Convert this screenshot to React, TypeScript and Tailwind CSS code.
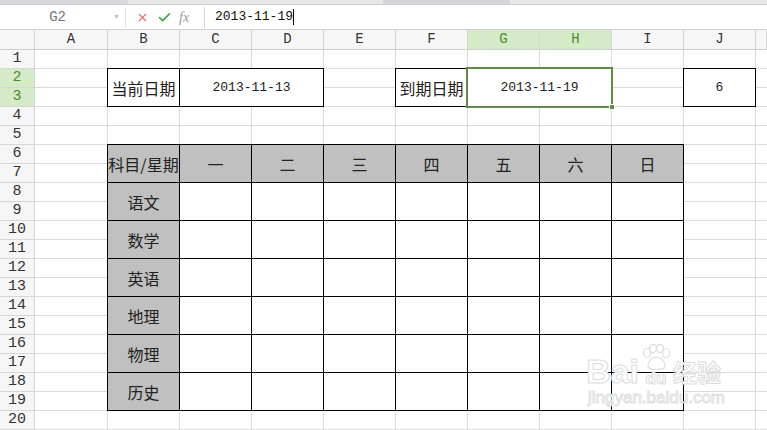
import { X, Check } from "lucide-react";

const COLS = ["A", "B", "C", "D", "E", "F", "G", "H", "I", "J", ""];
const ROWS = Array.from({ length: 20 }, (_, i) => i + 1);
const DAYS = ["一", "二", "三", "四", "五", "六", "日"];
const SUBJECTS = ["语文", "数学", "英语", "地理", "物理", "历史"];

const mono = "font-['Liberation_Mono','Noto_Sans_CJK_SC',monospace]";
const cjk = "font-['Noto_Sans_CJK_SC',sans-serif]";

const Watermark = () => (
  <div className="absolute left-[586px] top-[344px] pointer-events-none select-none">
    <div className="flex items-end">
      <span className="font-['Liberation_Sans',sans-serif] font-bold text-[34px] leading-[34px] text-white [-webkit-text-stroke:1px_#dcdcdc]">
        Bai
      </span>
      <div className="relative w-[34px] h-[44px] flex items-end justify-center">
        <svg width="32" height="26" viewBox="0 0 32 26" className="absolute top-0 left-[1px]">
          <g fill="#fff" stroke="#dcdcdc" strokeWidth="1.2">
            <ellipse cx="7" cy="9" rx="3.5" ry="4.5" />
            <ellipse cx="13" cy="4.5" rx="3.5" ry="4.2" />
            <ellipse cx="20" cy="4.5" rx="3.5" ry="4.2" />
            <ellipse cx="26" cy="9" rx="3.5" ry="4.5" />
            <path d="M8 22c0-5 4-9 8.5-9s8.5 4 8.5 9c0 3-3 3.5-8.5 3.5S8 25 8 22z" />
          </g>
        </svg>
        <span className="relative font-['Liberation_Sans',sans-serif] font-bold text-[17px] leading-[18px] text-white [-webkit-text-stroke:1px_#dcdcdc]">
          du
        </span>
      </div>
      <span className={`${cjk} font-bold text-[24px] leading-[32px] text-white [-webkit-text-stroke:1px_#dcdcdc]`}>
        经验
      </span>
    </div>
    <div className="font-['Liberation_Sans',sans-serif] text-[17px] leading-[20px] text-white [-webkit-text-stroke:1px_#e0e0e0] pl-[2px]">
      jingyan.baidu.com
    </div>
  </div>
);

export default function App() {
  return (
    <div className="w-[767px] h-[430px] overflow-hidden bg-white relative flex flex-col text-[#222]">
      {/* tab strip remnant */}
      <div className="h-[5px] flex bg-[#e6e7e9] border-b border-[#cfd0d3]">
        <div className="w-[128px] bg-[#d6d8db]" />
        <div className="w-[255px]" />
        <div className="w-[127px] bg-[#d3d5d8]" />
      </div>

      {/* formula bar */}
      <div className="h-[25px] flex items-center bg-white border-b border-[#d0d0d0]">
        <div className="w-[126px] h-[21px] flex items-center border-r border-[#e2e2e2]">
          <span className={`${mono} flex-1 text-center text-[14px] text-[#777] pl-[2px]`}>G2</span>
          <span className="text-[7px] text-[#bcbcbc] pr-[5px]">▼</span>
        </div>
        <div className="w-[78px] flex items-center">
          <X size={13} strokeWidth={2} className="ml-[10px] text-[#e06b6b]" />
          <Check size={15} strokeWidth={2.4} className="ml-[8px] text-[#3c9a3c]" />
          <span className="ml-[7px] font-['Liberation_Serif',serif] italic text-[14px] text-[#9a9a9a]">fx</span>
        </div>
        <div className="flex-1 h-[21px] border-l border-[#d6d6d6] flex items-center pl-[10px]">
          <span className={`${mono} text-[13px] text-[#111]`}>2013-11-19</span>
          <span className="w-px h-[16px] bg-black" />
        </div>
      </div>

      {/* column headers */}
      <div className="h-[20px] flex bg-[#f6f6f6] border-b border-[#cdcdcd]">
        <div className="w-[35px] shrink-0 border-r border-[#d6d6d6]" />
        {COLS.map((c, i) => (
          <div
            key={i}
            className={`${mono} ${i === 0 ? "w-[73px]" : i === 10 ? "flex-1" : "w-[72px]"} ${
              c === "G" || c === "H" ? "bg-[#d5ebc8] text-[#4b8a2c]" : "text-[#333]"
            } shrink-0 border-r border-[#d6d6d6] flex items-center justify-center text-[14px]`}
          >
            {c}
          </div>
        ))}
      </div>

      {/* body */}
      <div className="flex flex-1">
        <div className="w-[35px] shrink-0 flex flex-col bg-[#f6f6f6]">
          {ROWS.map((r) => (
            <div
              key={r}
              className={`${mono} h-[19px] shrink-0 border-r border-b border-[#d6d6d6] flex items-center justify-center text-[15px] ${
                r === 2 || r === 3 ? "bg-[#d5ebc8] text-[#4b8a2c]" : "text-[#333]"
              }`}
            >
              {r}
            </div>
          ))}
        </div>

        <div className="flex-1 grid">
          {/* grid lines */}
          <div className="col-start-1 row-start-1 grid grid-cols-[73px_repeat(9,72px)_1fr] grid-rows-[repeat(20,19px)]">
            {ROWS.map((r) =>
              COLS.map((_, c) => (
                <div
                  key={`${r}-${c}`}
                  className={c === 10 ? "border-b border-[#dadada]" : "border-r border-b border-[#dadada]"}
                />
              ))
            )}
          </div>

          {/* cell content */}
          <div className="col-start-1 row-start-1 grid grid-cols-[73px_repeat(9,72px)_1fr] grid-rows-[repeat(20,19px)]">
            <div className={`${cjk} col-start-2 row-start-2 row-span-2 -ml-px -mt-px bg-white border border-black flex items-center justify-center text-[16px] text-[#222]`}>
              当前日期
            </div>
            <div className={`${mono} col-start-3 col-span-2 row-start-2 row-span-2 -ml-px -mt-px bg-white border border-black flex items-center justify-center text-[13px] text-[#222]`}>
              2013-11-13
            </div>
            <div className={`${cjk} col-start-6 row-start-2 row-span-2 -ml-px -mt-px bg-white border border-black flex items-center justify-center text-[16px] text-[#222]`}>
              到期日期
            </div>
            <div className={`${mono} col-start-7 col-span-2 row-start-2 row-span-2 -ml-[2px] -mt-[2px] -mr-px -mb-px bg-white border-2 border-[#5e8b4a] flex items-center justify-center text-[13px] text-[#222] relative`}>
              2013-11-19
              <span className="absolute -right-[4px] -bottom-[4px] w-[6px] h-[6px] bg-[#5e8b4a] border border-white" />
            </div>
            <div className={`${mono} col-start-10 row-start-2 row-span-2 -ml-px -mt-px bg-white border border-black flex items-center justify-center text-[13px] text-[#222]`}>
              6
            </div>

            {/* timetable */}
            <div className="col-start-2 col-span-8 row-start-6 row-span-14 grid grid-cols-[repeat(8,72px)] grid-rows-[repeat(7,38px)]">
              <div className={`${cjk} -ml-px -mt-px bg-[#c0c0c0] border border-black flex items-center justify-center overflow-hidden whitespace-nowrap text-[16px] text-[#222]`}>
                科目/星期
              </div>
              {DAYS.map((d) => (
                <div
                  key={d}
                  className={`${cjk} -ml-px -mt-px bg-[#c0c0c0] border border-black flex items-center justify-center text-[16px] text-[#222]`}
                >
                  {d}
                </div>
              ))}
              {SUBJECTS.map((s) => (
                <div key={s} className="contents">
                  <div className={`${cjk} -ml-px -mt-px bg-[#c0c0c0] border border-black flex items-center justify-center text-[16px] text-[#222]`}>
                    {s}
                  </div>
                  {DAYS.map((d) => (
                    <div key={d} className="-ml-px -mt-px bg-white border border-black" />
                  ))}
                </div>
              ))}
            </div>
          </div>
        </div>
      </div>

      <Watermark />
    </div>
  );
}
